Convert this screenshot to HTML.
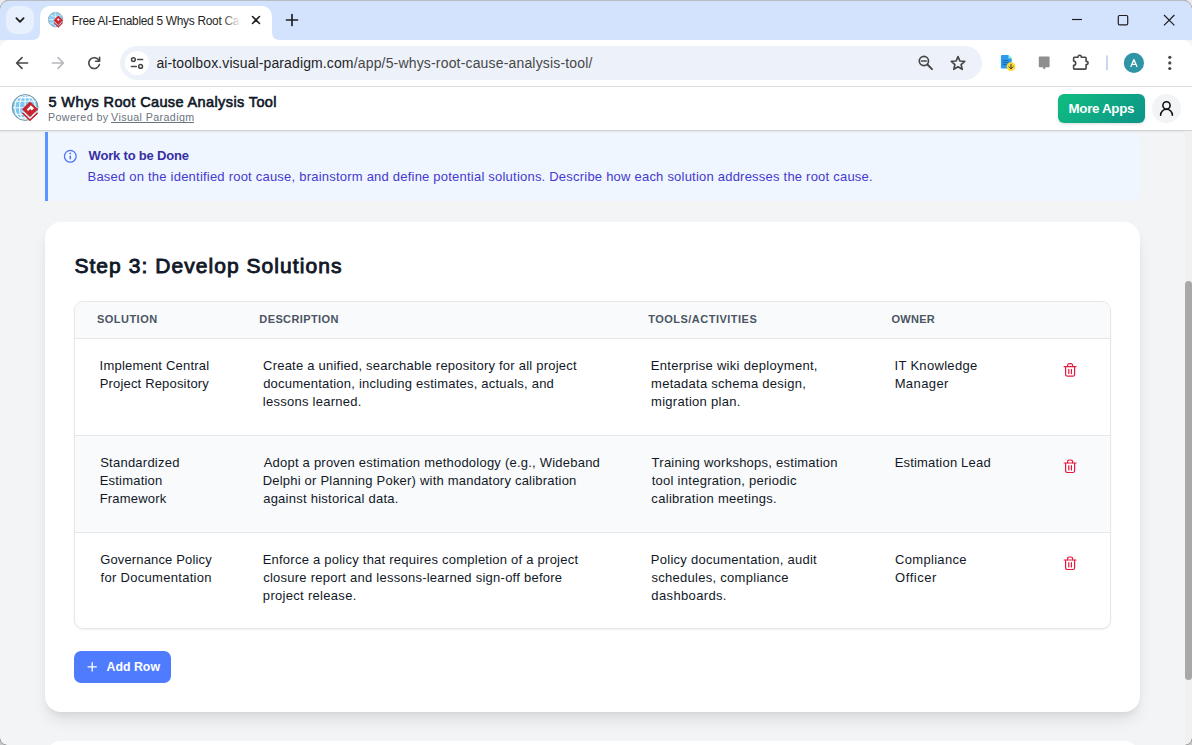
<!DOCTYPE html>
<html>
<head>
<meta charset="utf-8">
<title>5 Whys</title>
<style>
*{box-sizing:border-box;margin:0;padding:0}
html,body{width:1192px;height:745px;overflow:hidden}
body{font-family:"Liberation Sans",sans-serif;background:#f3f4f6;position:relative;color:#111827}
.abs{position:absolute}
.t{position:absolute;white-space:nowrap}
/* ---------- browser chrome ---------- */
#tabstrip{left:0;top:0;width:1192px;height:40px;background:#d3e3fd}
#topline{left:0;top:0;width:1192px;height:1px;background:#b9bcc2}
#tabsearch{left:6px;top:6px;width:28px;height:28px;border-radius:10px;background:#e9f0fd}
#tab{left:40px;top:6px;width:232px;height:34px;background:#fff;border-radius:10px 10px 0 0}
#toolbar{left:0;top:40px;width:1192px;height:46px;background:#fff;border-radius:9px 9px 0 0}
#tbline{left:0;top:86px;width:1192px;height:1px;background:#dcdfe4}
#omni{left:120px;top:46px;width:862px;height:34px;border-radius:17px;background:#edf2fa}
#siteinfo{left:125px;top:51px;width:24px;height:24px;border-radius:12px;background:#fff}
#tabfade{left:222px;top:10px;width:22px;height:22px;background:linear-gradient(90deg,rgba(255,255,255,0),#fff 85%)}
/* ---------- app header ---------- */
#apphdr{left:0;top:87px;width:1192px;height:43px;background:#fff;box-shadow:0 1px 0 rgba(0,0,0,.08),0 2px 0 rgba(0,0,0,.045),0 3px 0 rgba(0,0,0,.012)}
#more{left:1058px;top:94px;width:87px;height:29px;border-radius:6px;background:linear-gradient(135deg,#10b981 10%,#0d9488);box-shadow:0 1px 3px rgba(0,0,0,.15)}
#user{left:1152px;top:94px;width:29px;height:29px;border-radius:50%;background:#f3f4f6}
#vpul{left:111px;top:122px;width:82.5px;height:1px;background:#6b7280}
/* ---------- page ---------- */
#banner{left:45px;top:132px;width:1095px;height:69px;background:#eff6ff;border-left:3px solid #5b95ff;border-radius:0 8px 8px 0}
#card{left:45px;top:222px;width:1095px;height:490px;background:#fff;border-radius:16px;box-shadow:0 10px 15px -3px rgba(0,0,0,.1),0 4px 6px -2px rgba(0,0,0,.05)}
#card2{left:45px;top:741px;width:1095px;height:40px;background:#fff;border-radius:16px}
#table{left:74px;top:301px;width:1037px;height:328px;border:1px solid #e5e7eb;border-radius:9px;background:#fff;overflow:hidden;box-shadow:0 1px 2px rgba(0,0,0,.06)}
#thead{left:0;top:0;width:1035px;height:37px;background:#f9fafb;border-bottom:1px solid #e5e7eb}
#row2{left:0;top:133px;width:1035px;height:98px;background:#f9fafb;border-top:1px solid #e5e7eb;border-bottom:1px solid #e5e7eb}
.th{font-size:11px;font-weight:bold;color:#4b5563;letter-spacing:.6px;line-height:14px}
.td{font-size:13px;color:#111827;line-height:18px}
#addrow{left:74px;top:651px;width:97px;height:32px;border-radius:7px;background:#4f7cff}
/* scrollbar */
#sbtrack{left:1185px;top:131px;width:7px;height:614px;background:#f0f0f0}
#sbthumb{left:1185px;top:280.6px;width:7px;height:399px;border-radius:3.5px;background:#a8a8a8}
</style>
</head>
<body>
<!-- CHROME -->
<div class="abs" id="tabstrip"></div>
<div class="abs" id="topline"></div>
<div class="abs" id="tabsearch"></div>
<div class="abs" id="tab"></div>
<div class="abs" id="toolbar"></div>
<div class="abs" id="tbline"></div>
<div class="abs" id="omni"></div>
<div class="abs" id="siteinfo"></div>
<!-- PAGE -->
<div class="abs" id="banner"></div>
<div class="abs" id="card"></div>
<div class="abs" id="card2"></div>
<div class="abs" id="table">
  <div class="abs" id="thead"></div>
  <div class="abs" id="row2"></div>
</div>
<div class="abs" id="addrow"></div>
<div class="abs" id="apphdr"></div>
<div class="abs" id="more"></div>
<div class="abs" id="user"></div>
<!--ICONS-->
<svg class="abs" id="chromeicons" style="left:0;top:0" width="1192" height="87" viewBox="0 0 1192 87" fill="none">
  <!-- tab curve feet -->
  <path d="M32 40 Q40 40 40 32 L40 40 Z" fill="#fff"/>
  <path d="M280 40 Q272 40 272 32 L272 40 Z" fill="#fff"/>
  <!-- tab search chevron -->
  <path d="M16.4 18.2 L20 21.8 L23.6 18.2" stroke="#1f1f1f" stroke-width="1.8" stroke-linecap="round" stroke-linejoin="round"/>
  <!-- favicon -->
  <g>
    <circle cx="55.6" cy="19.6" r="7.2" fill="#8fd0f2" stroke="#7aa0b4" stroke-width=".8"/>
    <path d="M48.6 19.6H62.6M55.6 12.4V26.8M50.5 15.5Q55.6 17.5 60.7 15.5M50.5 23.7Q55.6 21.7 60.7 23.7" stroke="#e8f6fd" stroke-width=".7"/>
    <path d="M58.3 15.6 L63 20.3 L58.3 25 L53.6 20.3 Z" fill="#d22630"/>
    <path d="M54 22.6 L58.3 26.9 L62.6 22.6" stroke="#d22630" stroke-width="1.1"/>
    <rect x="57.3" y="18.6" width="2" height="2" fill="#fff" transform="rotate(45 58.3 19.6)"/>
  </g>
  <!-- tab close -->
  <path d="M252.5 16.5 L259.5 23.5 M259.5 16.5 L252.5 23.5" stroke="#1f1f1f" stroke-width="1.6" stroke-linecap="round"/>
  <!-- new tab -->
  <path d="M286.5 20 H297.5 M292 14.5 V25.5" stroke="#1f1f1f" stroke-width="1.7" stroke-linecap="round"/>
  <!-- window controls -->
  <path d="M1072 19.5 H1082" stroke="#1f1f1f" stroke-width="1.2"/>
  <rect x="1118.3" y="15.5" width="9.4" height="9.4" rx="1.2" stroke="#1f1f1f" stroke-width="1.2"/>
  <path d="M1164 15 L1174.4 25.4 M1174.4 15 L1164 25.4" stroke="#1f1f1f" stroke-width="1.2"/>
  <!-- back -->
  <path d="M27.6 63 H17 M22 57.6 L16.6 63 L22 68.4" stroke="#474747" stroke-width="1.6" stroke-linecap="round" stroke-linejoin="round"/>
  <!-- forward (disabled) -->
  <path d="M52.4 63 H63 M58 57.6 L63.4 63 L58 68.4" stroke="#b4b7bb" stroke-width="1.6" stroke-linecap="round" stroke-linejoin="round"/>
  <!-- reload -->
  <path d="M99 60.6 A5.4 5.4 0 1 0 99.4 64.6" stroke="#474747" stroke-width="1.6" stroke-linecap="round"/>
  <path d="M99.6 57.2 V61.2 H95.6" stroke="#474747" stroke-width="1.6" stroke-linecap="round" stroke-linejoin="round"/>
  <!-- site info (tune) -->
  <g stroke="#474747" stroke-width="1.5" stroke-linecap="round">
    <circle cx="133.4" cy="59.6" r="1.9"/>
    <path d="M137.6 59.6 H142.6"/>
    <circle cx="140.6" cy="66.4" r="1.9"/>
    <path d="M131.4 66.4 H136.4"/>
  </g>
  <!-- zoom -->
  <g stroke="#474747" stroke-width="1.7" stroke-linecap="round">
    <circle cx="923.9" cy="61" r="4.6"/>
    <path d="M927.4 64.5 L932 69.1" stroke-width="2"/>
    <path d="M921.7 61 H926.1"/>
  </g>
  <!-- star -->
  <path d="M958 56.6 L959.9 61 L964.7 61.4 L961.1 64.6 L962.2 69.3 L958 66.8 L953.8 69.3 L954.9 64.6 L951.3 61.4 L956.1 61 Z" stroke="#474747" stroke-width="1.7" stroke-linejoin="round"/>
  <!-- doc ext icon -->
  <g>
    <path d="M1002.2 55.1 H1008.4 L1011.7 58.4 V67.2 Q1011.7 68.5 1010.4 68.5 H1002.2 Q1000.9 68.5 1000.9 67.2 V56.4 Q1000.9 55.1 1002.2 55.1Z" fill="#2e9bea"/>
    <path d="M1008.4 55.1 L1011.7 58.4 H1008.4Z" fill="#7df3e1"/>
    <path d="M1002.8 60.6 H1008.6 M1002.8 62.6 H1008.6 M1002.8 64.6 H1006.6" stroke="#1c5fa8" stroke-width=".9"/>
    <circle cx="1011" cy="66.7" r="4.4" fill="#fbd934"/>
    <path d="M1011 64.3 V68.6 M1009 66.8 L1011 68.9 L1013 66.8" stroke="#3a3a2a" stroke-width="1" stroke-linecap="round" stroke-linejoin="round" fill="none"/>
  </g>
  <!-- speech bubble -->
  <path d="M1039.6 56.6 H1048.8 Q1049.6 56.6 1049.6 57.4 V66.5 Q1049.6 67.3 1048.8 67.3 H1045.8 L1044.2 69.8 L1042.6 67.3 H1039.6 Q1038.8 67.3 1038.8 66.5 V57.4 Q1038.8 56.6 1039.6 56.6Z" fill="#8e8e8e"/>
  <!-- puzzle -->
  <path d="M1074.4 57.3 H1078.1 V56.9 A1.6 1.6 0 0 1 1081.3 56.9 V57.3 H1085.2 Q1086.1 57.3 1086.1 58.2 V61.4 H1086.5 A1.6 1.6 0 0 1 1086.5 64.6 H1086.1 V68.2 Q1086.1 69.1 1085.2 69.1 H1074.4 Q1073.6 69.1 1073.6 68.2 V65.3 A2.1 2.1 0 0 0 1073.6 61.1 V58.2 Q1073.6 57.3 1074.4 57.3Z" stroke="#474747" stroke-width="1.6" stroke-linejoin="round"/>
  <!-- separator -->
  <rect x="1106" y="55.2" width="2" height="15.4" rx="1" fill="#c7d6f6"/>
  <!-- avatar -->
  <circle cx="1133.9" cy="62.9" r="10.1" fill="#2e94a6"/>
  <path d="M1130.9 66.5 L1133.9 59.5 L1136.9 66.5 M1131.9 64.3 H1135.9" stroke="#fff" stroke-width="1.25" stroke-linejoin="round" stroke-linecap="round"/>
  <!-- menu dots -->
  <circle cx="1169.8" cy="57.3" r="1.6" fill="#474747"/>
  <circle cx="1169.8" cy="62.9" r="1.6" fill="#474747"/>
  <circle cx="1169.8" cy="68.5" r="1.6" fill="#474747"/>
</svg>
<svg class="abs" id="pageicons" style="left:0;top:87px" width="1192" height="658" viewBox="0 87 1192 658" fill="none">
  <!-- app logo -->
  <g>
    <circle cx="25.1" cy="107.5" r="12.8" fill="#7ec6ef"/>
    <g stroke="#f4fbff" stroke-width="1.15">
      <path d="M12.6 107.7H37.6M14 101.2H36.2M14 114.2H36.2M17.5 97.6H32.7M17.5 117.8H32.7"/>
      <path d="M25.1 94.8V120.2"/>
      <ellipse cx="25.1" cy="107.5" rx="5.6" ry="12.6"/>
      <ellipse cx="25.1" cy="107.5" rx="10.2" ry="12.6"/>
    </g>
    <circle cx="25.1" cy="107.5" r="12.9" stroke="#5c8397" stroke-width=".9"/>
    <path d="M22.7 112.7 L30 119.9 L37.4 112.7" stroke="#c8242e" stroke-width="1.9"/>
    <path d="M21.6 110.4 L30 118.5 L38.4 110.4" stroke="#fff" stroke-width="1"/>
    <path d="M30 101.4 L38 109.2 L30 117 L22 109.2 Z" fill="#c8242e"/>
    <path d="M30.4 104.6 L33.5 107.7 L31.3 109.9 L29.7 108.3 L27.6 110.4 L26.2 109 L28.3 106.9 Z" fill="#fff" transform="translate(.5 .6)"/>
  </g>
  <!-- user icon -->
  <circle cx="1166.5" cy="105.4" r="3.6" stroke="#111" stroke-width="1.6"/>
  <path d="M1160.6 115.2 A5.9 5.9 0 0 1 1172.4 115.2" stroke="#111" stroke-width="1.6" stroke-linecap="round"/>
  <!-- info icon -->
  <circle cx="70.3" cy="156.3" r="5.85" stroke="#4f70f8" stroke-width="1.25"/>
  <path d="M70.3 155.7 V159.3" stroke="#4f70f8" stroke-width="1.5"/>
  <circle cx="70.3" cy="153.4" r=".9" fill="#4f70f8"/>
  <!-- trash icons -->
  <g stroke="#e8193f" stroke-width="1.2" stroke-linecap="round" stroke-linejoin="round" transform="translate(0 0)">
    <path d="M1064.2 366.7 H1076"/>
    <path d="M1067.6 366.5 V365.4 A1.7 1.7 0 0 1 1069.3 363.7 H1070.9 A1.7 1.7 0 0 1 1072.6 365.4 V366.5"/>
    <path d="M1065.6 367 V374.4 A1.8 1.8 0 0 0 1067.4 376.2 H1072.8 A1.8 1.8 0 0 0 1074.6 374.4 V367"/>
    <path d="M1068.8 369.4 V373.6 M1071.4 369.4 V373.6"/>
  </g>
  <g stroke="#e8193f" stroke-width="1.2" stroke-linecap="round" stroke-linejoin="round" transform="translate(0 96.3)">
    <path d="M1064.2 366.7 H1076"/>
    <path d="M1067.6 366.5 V365.4 A1.7 1.7 0 0 1 1069.3 363.7 H1070.9 A1.7 1.7 0 0 1 1072.6 365.4 V366.5"/>
    <path d="M1065.6 367 V374.4 A1.8 1.8 0 0 0 1067.4 376.2 H1072.8 A1.8 1.8 0 0 0 1074.6 374.4 V367"/>
    <path d="M1068.8 369.4 V373.6 M1071.4 369.4 V373.6"/>
  </g>
  <g stroke="#e8193f" stroke-width="1.2" stroke-linecap="round" stroke-linejoin="round" transform="translate(0 193.3)">
    <path d="M1064.2 366.7 H1076"/>
    <path d="M1067.6 366.5 V365.4 A1.7 1.7 0 0 1 1069.3 363.7 H1070.9 A1.7 1.7 0 0 1 1072.6 365.4 V366.5"/>
    <path d="M1065.6 367 V374.4 A1.8 1.8 0 0 0 1067.4 376.2 H1072.8 A1.8 1.8 0 0 0 1074.6 374.4 V367"/>
    <path d="M1068.8 369.4 V373.6 M1071.4 369.4 V373.6"/>
  </g>
  <!-- plus -->
  <path d="M88 666.8 H96.4 M92.2 662.6 V671" stroke="#fff" stroke-width="1.3" stroke-linecap="round"/>
</svg>
<svg class="abs" id="wincorners" style="left:0;top:0;z-index:50;pointer-events:none" width="1192" height="745" viewBox="0 0 1192 745" fill="none">
  <path d="M0 0 H8 A8 8 0 0 0 0 8 Z" fill="#ebebeb"/>
  <path d="M0 8.5 A8.5 8.5 0 0 1 8.5 0.5" stroke="#b3b1ad" stroke-width="1"/>
  <path d="M1192 0 H1184 A8 8 0 0 1 1192 8 Z" fill="#ebebeb"/>
  <path d="M1192 8.5 A8.5 8.5 0 0 0 1183.5 0.5" stroke="#b3b1ad" stroke-width="1"/>
  <path d="M0 745 V739 A6 6 0 0 0 6 745 Z" fill="#c9c9c9"/>
  <path d="M0 738.5 A6.5 6.5 0 0 0 6.5 745" stroke="#9a9a9a" stroke-width="1"/>
  <path d="M1192 745 V739 A6 6 0 0 1 1186 745 Z" fill="#c9c9c9"/>
  <path d="M1192 738.5 A6.5 6.5 0 0 1 1185.5 745" stroke="#9a9a9a" stroke-width="1"/>
</svg>
<!--/ICONS-->
<!--TEXT-->
<div class="t" id="tabtitle" style="left:71.72px;top:12px;font-size:11.9px;line-height:18px;letter-spacing:-0.282px;color:#1f1f1f">Free AI-Enabled 5 Whys Root Ca</div>
<div class="t" style="left:156.41px;top:53px;font-size:14px;line-height:20px;letter-spacing:0.116px;color:#1f1f1f">ai-toolbox.visual-paradigm.com</div>
<div class="t" style="left:353.70px;top:53px;font-size:14px;line-height:20px;letter-spacing:0.168px;color:#474747">/app/5-whys-root-cause-analysis-tool/</div>
<div class="t" style="left:48.52px;top:92px;font-size:14.5px;line-height:20px;letter-spacing:0.382px;color:#111827;-webkit-text-stroke:0.61px #111827">5 Whys Root Cause Analysis Tool</div>
<div class="t" style="left:47.92px;top:109px;font-size:10.7px;line-height:16px;letter-spacing:0.429px;color:#6b7280">Powered by</div>
<div class="t" id="vp" style="left:111.05px;top:109px;font-size:10.7px;line-height:16px;letter-spacing:0.395px;color:#6b7280">Visual Paradigm</div>
<div class="t" style="left:1068.51px;top:99px;font-size:13.3px;line-height:19px;letter-spacing:-0.284px;color:#ffffff;font-weight:bold">More Apps</div>
<div class="t" style="left:88.59px;top:146px;font-size:13px;line-height:19px;letter-spacing:-0.192px;color:#3730a3;font-weight:bold">Work to be Done</div>
<div class="t" style="left:87.53px;top:167px;font-size:13px;line-height:19px;letter-spacing:0.219px;color:#4539cf">Based on the identified root cause, brainstorm and define potential solutions. Describe how each solution addresses the root cause.</div>
<div class="t" style="left:74.39px;top:252px;font-size:21px;line-height:27px;letter-spacing:1.057px;color:#111827;-webkit-text-stroke:0.88px #111827">Step 3: Develop Solutions</div>
<div class="t" style="left:96.88px;top:311px;font-size:11px;line-height:16px;letter-spacing:0.490px;color:#4b5563;font-weight:bold">SOLUTION</div>
<div class="t" style="left:259.36px;top:311px;font-size:11px;line-height:16px;letter-spacing:0.380px;color:#4b5563;font-weight:bold">DESCRIPTION</div>
<div class="t" style="left:648.18px;top:311px;font-size:11px;line-height:16px;letter-spacing:0.487px;color:#4b5563;font-weight:bold">TOOLS/ACTIVITIES</div>
<div class="t" style="left:891.55px;top:311px;font-size:11px;line-height:16px;letter-spacing:0.253px;color:#4b5563;font-weight:bold">OWNER</div>
<div class="t" style="left:99.60px;top:356px;font-size:13px;line-height:19px;letter-spacing:0.210px;color:#111827">Implement Central</div>
<div class="t" style="left:99.73px;top:374px;font-size:13px;line-height:19px;letter-spacing:0.170px;color:#111827">Project Repository</div>
<div class="t" style="left:263.04px;top:356px;font-size:13px;line-height:19px;letter-spacing:0.227px;color:#111827">Create a unified, searchable repository for all project</div>
<div class="t" style="left:263.15px;top:374px;font-size:13px;line-height:19px;letter-spacing:0.219px;color:#111827">documentation, including estimates, actuals, and</div>
<div class="t" style="left:262.82px;top:392px;font-size:13px;line-height:19px;letter-spacing:0.260px;color:#111827">lessons learned.</div>
<div class="t" style="left:650.83px;top:356px;font-size:13px;line-height:19px;letter-spacing:0.295px;color:#111827">Enterprise wiki deployment,</div>
<div class="t" style="left:651.04px;top:374px;font-size:13px;line-height:19px;letter-spacing:0.271px;color:#111827">metadata schema design,</div>
<div class="t" style="left:651.04px;top:392px;font-size:13px;line-height:19px;letter-spacing:0.292px;color:#111827">migration plan.</div>
<div class="t" style="left:894.50px;top:356px;font-size:13px;line-height:19px;letter-spacing:0.317px;color:#111827">IT Knowledge</div>
<div class="t" style="left:894.63px;top:374px;font-size:13px;line-height:19px;letter-spacing:0.412px;color:#111827">Manager</div>
<div class="t" style="left:100.21px;top:453px;font-size:13px;line-height:19px;letter-spacing:0.238px;color:#111827">Standardized</div>
<div class="t" style="left:99.73px;top:471px;font-size:13px;line-height:19px;letter-spacing:0.202px;color:#111827">Estimation</div>
<div class="t" style="left:99.73px;top:489px;font-size:13px;line-height:19px;letter-spacing:0.180px;color:#111827">Framework</div>
<div class="t" style="left:263.67px;top:453px;font-size:13px;line-height:19px;letter-spacing:0.225px;color:#111827">Adopt a proven estimation methodology (e.g., Wideband</div>
<div class="t" style="left:262.63px;top:471px;font-size:13px;line-height:19px;letter-spacing:0.215px;color:#111827">Delphi or Planning Poker) with mandatory calibration</div>
<div class="t" style="left:263.15px;top:489px;font-size:13px;line-height:19px;letter-spacing:0.256px;color:#111827">against historical data.</div>
<div class="t" style="left:651.61px;top:453px;font-size:13px;line-height:19px;letter-spacing:0.249px;color:#111827">Training workshops, estimation</div>
<div class="t" style="left:651.70px;top:471px;font-size:13px;line-height:19px;letter-spacing:0.268px;color:#111827">tool integration, periodic</div>
<div class="t" style="left:651.35px;top:489px;font-size:13px;line-height:19px;letter-spacing:0.306px;color:#111827">calibration meetings.</div>
<div class="t" style="left:894.63px;top:453px;font-size:13px;line-height:19px;letter-spacing:0.199px;color:#111827">Estimation Lead</div>
<div class="t" style="left:100.15px;top:550px;font-size:13px;line-height:19px;letter-spacing:0.154px;color:#111827">Governance Policy</div>
<div class="t" style="left:100.62px;top:568px;font-size:13px;line-height:19px;letter-spacing:0.294px;color:#111827">for Documentation</div>
<div class="t" style="left:262.63px;top:550px;font-size:13px;line-height:19px;letter-spacing:0.239px;color:#111827">Enforce a policy that requires completion of a project</div>
<div class="t" style="left:263.15px;top:568px;font-size:13px;line-height:19px;letter-spacing:0.251px;color:#111827">closure report and lessons-learned sign-off before</div>
<div class="t" style="left:262.86px;top:586px;font-size:13px;line-height:19px;letter-spacing:0.303px;color:#111827">project release.</div>
<div class="t" style="left:650.83px;top:550px;font-size:13px;line-height:19px;letter-spacing:0.265px;color:#111827">Policy documentation, audit</div>
<div class="t" style="left:651.54px;top:568px;font-size:13px;line-height:19px;letter-spacing:0.276px;color:#111827">schedules, compliance</div>
<div class="t" style="left:651.35px;top:586px;font-size:13px;line-height:19px;letter-spacing:0.358px;color:#111827">dashboards.</div>
<div class="t" style="left:895.04px;top:550px;font-size:13px;line-height:19px;letter-spacing:0.310px;color:#111827">Compliance</div>
<div class="t" style="left:895.08px;top:568px;font-size:13px;line-height:19px;letter-spacing:0.547px;color:#111827">Officer</div>
<div class="t" style="left:106.59px;top:658px;font-size:12.3px;line-height:18px;letter-spacing:0.018px;color:#ffffff;font-weight:bold">Add Row</div>
<!--/TEXT-->
<div class="abs" id="tabfade"></div>
<div class="abs" id="vpul"></div>
<div class="abs" id="sbtrack"></div>
<div class="abs" id="sbthumb"></div>
</body>
</html>
